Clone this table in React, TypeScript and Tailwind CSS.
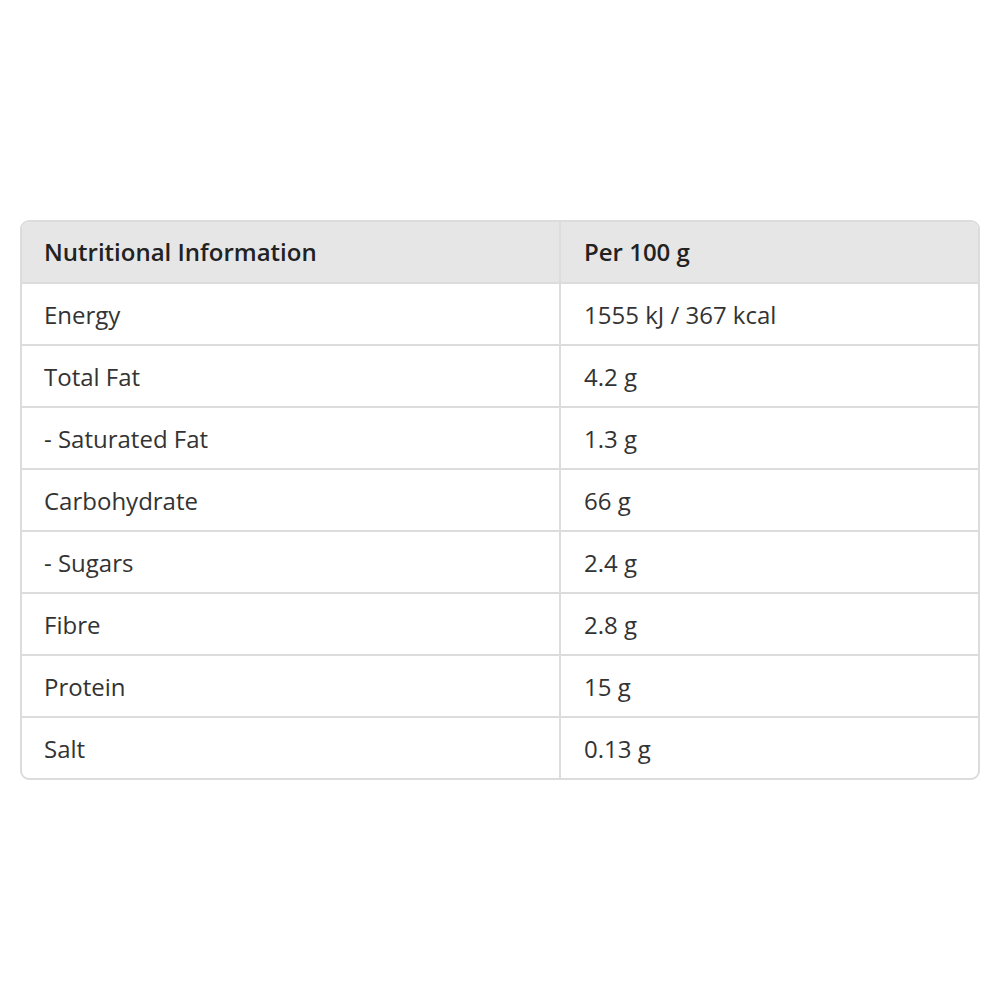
import React from 'react';

const rows: [string, string][] = [
  ['Energy', '1555 kJ / 367 kcal'],
  ['Total Fat', '4.2 g'],
  ['- Saturated Fat', '1.3 g'],
  ['Carbohydrate', '66 g'],
  ['- Sugars', '2.4 g'],
  ['Fibre', '2.8 g'],
  ['Protein', '15 g'],
  ['Salt', '0.13 g'],
];

const App: React.FC = () => {
  return (
    <div
      className="min-h-screen flex items-center bg-white px-[20px]"
      style={{ fontFamily: '"Open Sans", "Noto Sans", sans-serif' }}
    >
      <div className="w-full border-2 border-[#dcdcdc] rounded-[9px] overflow-hidden">
        <table className="w-full border-separate border-spacing-0 text-[24px]">
          <thead>
            <tr className="bg-[#e6e6e6]">
              <th className="w-[539px] h-[62px] px-[22px] text-left font-semibold text-[#222] border-r-2 border-b-2 border-[#dcdcdc]">
                Nutritional Information
              </th>
              <th className="h-[62px] px-[23px] text-left font-semibold text-[#222] border-b-2 border-[#dcdcdc]">
                Per 100 g
              </th>
            </tr>
          </thead>
          <tbody>
            {rows.map(([label, value], i) => {
              const last = i === rows.length - 1;
              return (
                <tr key={label}>
                  <td
                    className={
                      last
                        ? 'h-[60px] px-[22px] pt-[2px] text-[#333] border-r-2 border-[#dcdcdc]'
                        : 'h-[62px] px-[22px] pt-[2px] text-[#333] border-r-2 border-b-2 border-[#dcdcdc]'
                    }
                  >
                    {label}
                  </td>
                  <td
                    className={
                      last
                        ? 'h-[60px] px-[23px] pt-[2px] text-[#333]'
                        : 'h-[62px] px-[23px] pt-[2px] text-[#333] border-b-2 border-[#dcdcdc]'
                    }
                  >
                    {value}
                  </td>
                </tr>
              );
            })}
          </tbody>
        </table>
      </div>
    </div>
  );
};

export default App;
